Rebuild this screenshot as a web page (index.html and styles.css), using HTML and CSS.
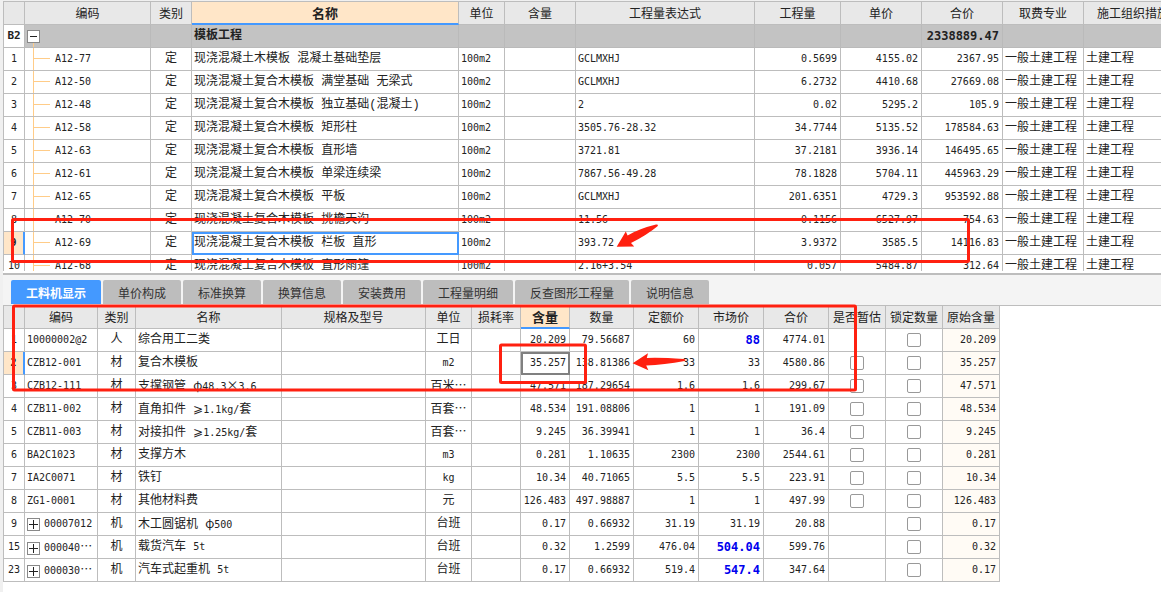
FILE: index.html
```html
<!DOCTYPE html>
<html lang="zh-CN">
<head>
<meta charset="utf-8">
<title>模板工程</title>
<link rel="stylesheet" href="styles.css">
</head>
<body>
<main class="workspace">
<section class="pane">
<div class="pane-body">
<table class="grid items">
<colgroup><col class="w-no"><col class="w-code"><col class="w-kind"><col class="w-name"><col class="w-unit"><col class="w-content"><col class="w-expr"><col class="w-qty"><col class="w-price"><col class="w-price"><col class="w-price"><col></colgroup>
<thead><tr><th></th><th>编码</th><th>类别</th><th class="current">名称</th><th>单位</th><th>含量</th><th>工程量表达式</th><th>工程量</th><th>单价</th><th>合价</th><th>取费专业</th><th class="cut">施工组织措施</th></tr></thead>
<tbody>
<tr class="group"><td>B2</td><td><button class="toggle" type="button" aria-label="收起"><svg width="11" height="11"><path d="M2 5.5h7" stroke="#222"/></svg></button></td><td></td><td>模板工程</td><td></td><td></td><td></td><td></td><td></td><td>2338889.47</td><td></td><td></td></tr>
<tr><td>1</td><td>A12-77</td><td>定</td><td>现浇混凝土木模板 混凝土基础垫层</td><td>100m2</td><td></td><td>GCLMXHJ</td><td>0.5699</td><td>4155.02</td><td>2367.95</td><td>一般土建工程</td><td>土建工程</td></tr>
<tr><td>2</td><td>A12-50</td><td>定</td><td>现浇混凝土复合木模板 满堂基础 无梁式</td><td>100m2</td><td></td><td>GCLMXHJ</td><td>6.2732</td><td>4410.68</td><td>27669.08</td><td>一般土建工程</td><td>土建工程</td></tr>
<tr><td>3</td><td>A12-48</td><td>定</td><td>现浇混凝土复合木模板 独立基础(混凝土)</td><td>100m2</td><td></td><td>2</td><td>0.02</td><td>5295.2</td><td>105.9</td><td>一般土建工程</td><td>土建工程</td></tr>
<tr><td>4</td><td>A12-58</td><td>定</td><td>现浇混凝土复合木模板 矩形柱</td><td>100m2</td><td></td><td>3505.76-28.32</td><td>34.7744</td><td>5135.52</td><td>178584.63</td><td>一般土建工程</td><td>土建工程</td></tr>
<tr><td>5</td><td>A12-63</td><td>定</td><td>现浇混凝土复合木模板 直形墙</td><td>100m2</td><td></td><td>3721.81</td><td>37.2181</td><td>3936.14</td><td>146495.65</td><td>一般土建工程</td><td>土建工程</td></tr>
<tr><td>6</td><td>A12-61</td><td>定</td><td>现浇混凝土复合木模板 单梁连续梁</td><td>100m2</td><td></td><td>7867.56-49.28</td><td>78.1828</td><td>5704.11</td><td>445963.29</td><td>一般土建工程</td><td>土建工程</td></tr>
<tr><td>7</td><td>A12-65</td><td>定</td><td>现浇混凝土复合木模板 平板</td><td>100m2</td><td></td><td>GCLMXHJ</td><td>201.6351</td><td>4729.3</td><td>953592.88</td><td>一般土建工程</td><td>土建工程</td></tr>
<tr><td>8</td><td>A12-70</td><td>定</td><td>现浇混凝土复合木模板 挑檐天沟</td><td>100m2</td><td></td><td>11.56</td><td>0.1156</td><td>6527.97</td><td>754.63</td><td>一般土建工程</td><td>土建工程</td></tr>
<tr class="active"><td>9</td><td>A12-69</td><td>定</td><td class="selected">现浇混凝土复合木模板 栏板 直形</td><td>100m2</td><td></td><td>393.72</td><td>3.9372</td><td>3585.5</td><td>14116.83</td><td>一般土建工程</td><td>土建工程</td></tr>
<tr><td>10</td><td>A12-68</td><td>定</td><td>现浇混凝土复合木模板 直形雨篷</td><td>100m2</td><td></td><td>2.16+3.54</td><td>0.057</td><td>5484.87</td><td>312.64</td><td>一般土建工程</td><td>土建工程</td></tr>
</tbody>
</table>
</div>
</section>
<nav class="tabs">
<button class="tab tab-active" type="button">工料机显示</button>
<button class="tab" type="button">单价构成</button>
<button class="tab" type="button">标准换算</button>
<button class="tab" type="button">换算信息</button>
<button class="tab" type="button">安装费用</button>
<button class="tab" type="button">工程量明细</button>
<button class="tab" type="button">反查图形工程量</button>
<button class="tab" type="button">说明信息</button>
</nav>
<section class="details">
<table class="grid resources">
<colgroup><col class="w-no"><col class="w-rcode"><col class="w-rkind"><col class="w-rname"><col class="w-spec"><col class="w-unit"><col class="w-loss"><col class="w-loss"><col class="w-rqty"><col class="w-rprice"><col class="w-rprice"><col class="w-rprice"><col class="w-check"><col class="w-check"><col class="w-check"></colgroup>
<thead><tr><th></th><th>编码</th><th>类别</th><th>名称</th><th>规格及型号</th><th>单位</th><th>损耗率</th><th class="current">含量</th><th>数量</th><th>定额价</th><th>市场价</th><th>合价</th><th id="estimate">是否暂估</th><th id="lock">锁定数量</th><th>原始含量</th></tr></thead>
<tbody>
<tr><td>1</td><td>10000002@2</td><td>人</td><td>综合用工二类</td><td></td><td>工日</td><td></td><td>20.209</td><td>79.56687</td><td>60</td><td class="changed">88</td><td>4774.01</td><td></td><td><input class="check" type="checkbox" aria-labelledby="lock"></td><td>20.209</td></tr>
<tr class="active"><td>2</td><td>CZB12-001</td><td>材</td><td>复合木模板</td><td></td><td class="latin">m2</td><td></td><td class="focus">35.257</td><td>138.81386</td><td>33</td><td>33</td><td>4580.86</td><td><input class="check" type="checkbox" aria-labelledby="estimate"></td><td><input class="check" type="checkbox" aria-labelledby="lock"></td><td>35.257</td></tr>
<tr><td>3</td><td>CZB12-111</td><td>材</td><td>支撑钢管 <span class="wide">φ</span><span class="latin">48.3</span><span class="wide">×</span><span class="latin">3.6</span></td><td></td><td>百米<span class="wide">⋯</span></td><td></td><td>47.571</td><td>187.29654</td><td>1.6</td><td>1.6</td><td>299.67</td><td><input class="check" type="checkbox" aria-labelledby="estimate"></td><td><input class="check" type="checkbox" aria-labelledby="lock"></td><td>47.571</td></tr>
<tr><td>4</td><td>CZB11-002</td><td>材</td><td>直角扣件 <span class="wide">⩾</span><span class="latin">1.1kg/</span>套</td><td></td><td>百套<span class="wide">⋯</span></td><td></td><td>48.534</td><td>191.08806</td><td>1</td><td>1</td><td>191.09</td><td><input class="check" type="checkbox" aria-labelledby="estimate"></td><td><input class="check" type="checkbox" aria-labelledby="lock"></td><td>48.534</td></tr>
<tr><td>5</td><td>CZB11-003</td><td>材</td><td>对接扣件 <span class="wide">⩾</span><span class="latin">1.25kg/</span>套</td><td></td><td>百套<span class="wide">⋯</span></td><td></td><td>9.245</td><td>36.39941</td><td>1</td><td>1</td><td>36.4</td><td><input class="check" type="checkbox" aria-labelledby="estimate"></td><td><input class="check" type="checkbox" aria-labelledby="lock"></td><td>9.245</td></tr>
<tr><td>6</td><td>BA2C1023</td><td>材</td><td>支撑方木</td><td></td><td class="latin">m3</td><td></td><td>0.281</td><td>1.10635</td><td>2300</td><td>2300</td><td>2544.61</td><td><input class="check" type="checkbox" aria-labelledby="estimate"></td><td><input class="check" type="checkbox" aria-labelledby="lock"></td><td>0.281</td></tr>
<tr><td>7</td><td>IA2C0071</td><td>材</td><td>铁钉</td><td></td><td class="latin">kg</td><td></td><td>10.34</td><td>40.71065</td><td>5.5</td><td>5.5</td><td>223.91</td><td><input class="check" type="checkbox" aria-labelledby="estimate"></td><td><input class="check" type="checkbox" aria-labelledby="lock"></td><td>10.34</td></tr>
<tr><td>8</td><td>ZG1-0001</td><td>材</td><td>其他材料费</td><td></td><td>元</td><td></td><td>126.483</td><td>497.98887</td><td>1</td><td>1</td><td>497.99</td><td><input class="check" type="checkbox" aria-labelledby="estimate"></td><td><input class="check" type="checkbox" aria-labelledby="lock"></td><td>126.483</td></tr>
<tr><td>9</td><td><button class="toggle" type="button" aria-label="展开"><svg width="11" height="11"><path d="M1 5.5h9M5.5 1v9" stroke="#222"/></svg></button>00007012</td><td>机</td><td>木工圆锯机 <span class="wide">φ</span><span class="latin">500</span></td><td></td><td>台班</td><td></td><td>0.17</td><td>0.66932</td><td>31.19</td><td>31.19</td><td>20.88</td><td></td><td><input class="check" type="checkbox" aria-labelledby="lock"></td><td>0.17</td></tr>
<tr><td>15</td><td><button class="toggle" type="button" aria-label="展开"><svg width="11" height="11"><path d="M1 5.5h9M5.5 1v9" stroke="#222"/></svg></button>000040<span class="wide">⋯</span></td><td>机</td><td>载货汽车 <span class="latin">5t</span></td><td></td><td>台班</td><td></td><td>0.32</td><td>1.2599</td><td>476.04</td><td class="changed">504.04</td><td>599.76</td><td></td><td><input class="check" type="checkbox" aria-labelledby="lock"></td><td>0.32</td></tr>
<tr><td>23</td><td><button class="toggle" type="button" aria-label="展开"><svg width="11" height="11"><path d="M1 5.5h9M5.5 1v9" stroke="#222"/></svg></button>000030<span class="wide">⋯</span></td><td>机</td><td>汽车式起重机 <span class="latin">5t</span></td><td></td><td>台班</td><td></td><td>0.17</td><td>0.66932</td><td>519.4</td><td class="changed">547.4</td><td>347.64</td><td></td><td><input class="check" type="checkbox" aria-labelledby="lock"></td><td>0.17</td></tr>
</tbody>
</table>
</section>
</main>
<svg class="marks" aria-hidden="true">
<g class="frames">
<rect x="12.5" y="219.5" width="956" height="42" rx="1"/>
<rect x="13.5" y="306" width="842" height="84" rx="1"/>
<rect x="500.5" y="345" width="85" height="37.5" rx="1"/>
</g>
<path class="arrow" d="M616.7 246.8L625.8 231.6L627.6 235.4Q640 228.5 656 224.6Q658.5 224.4 657.8 226Q647 235 631 243L634.2 246.6Z"/>
<path class="arrow" d="M632.6 363.3L648 353.2L646.8 358Q660 357.4 684 359Q687 360 684.6 361Q664 364.6 646.2 365.6L648.4 370.3Z"/>
</svg>
</body>
</html>
```
FILE: styles.css
```css
* { box-sizing: border-box; }

body {
  margin: 0;
  height: 100vh;
  padding: 1px 0 0 3px;
  overflow: hidden;
  background: #f0f0f0;
  color: #222;
  font-family: "Noto Sans CJK SC", sans-serif;
  font-size: 12px;
}

.workspace {
  display: flex;
  flex-direction: column;
  height: 100%;
  background: #fff;
}

.pane {
  display: flex;
  flex-direction: column;
  flex: 0 0 46vh;
  min-height: 0;
  padding-bottom: 2px;
}

.pane-body {
  flex: 1;
  min-height: 0;
  overflow: hidden;
}

/* Data grids */
.grid {
  table-layout: fixed;
  border-collapse: separate;
  border-spacing: 0;
  border-top: 1px solid #bdbdbd;
  border-left: 1px solid #bdbdbd;
}

.items { width: 100%; }
.resources { width: 997px; }

.w-no { width: 21px; }
.w-code { width: 126px; }
.w-kind { width: 41px; }
.w-name { width: 267px; }
.w-unit { width: 46px; }
.w-content { width: 71px; }
.w-expr { width: 179px; }
.w-qty { width: 86px; }
.w-price { width: 81px; }
.w-rcode { width: 73px; }
.w-rkind { width: 38px; }
.w-rname { width: 146px; }
.w-spec { width: 144px; }
.w-loss { width: 49px; }
.w-rqty { width: 64px; }
.w-rprice { width: 65px; }
.w-check { width: 57px; }

.grid th,
.grid td {
  height: 23px;
  padding: 0 2px;
  border-right: 1px solid #bdbdbd;
  border-bottom: 1px solid #bdbdbd;
  line-height: 18px;
  white-space: nowrap;
  overflow: hidden;
}

.grid th {
  padding: 0;
  background: #e8e8e8;
  font-weight: 400;
}

.grid .current {
  background: #ffe6c8;
  border-bottom: 2px solid #4499ff;
  font-size: 13px;
  font-weight: 700;
}

.grid .cut {
  padding-left: 13px;
  text-align: left;
}

.grid tr > :last-child { border-right-color: #bdbdbd; }
.items tr > :last-child { border-right: 0; }

.grid td,
.grid .latin {
  font-family: "DejaVu Sans Mono", "Noto Sans CJK SC", monospace;
  font-size: 10px;
}

.grid td:first-child { text-align: center; padding: 0; }

.items td:nth-child(3),
.items td:nth-child(4),
.items td:nth-child(11),
.items td:nth-child(12),
.resources td:nth-child(3),
.resources td:nth-child(4),
.resources td:nth-child(6) {
  font-family: "Liberation Mono", "Noto Sans CJK SC", monospace;
  font-size: 12px;
}

.resources td:nth-child(6).latin {
  font-family: "DejaVu Sans Mono", monospace;
  font-size: 10px;
}

.grid .wide {
  font-family: "Noto Sans CJK SC", sans-serif;
  font-size: 12px;
}

.items td:nth-child(3),
.resources td:nth-child(3),
.resources td:nth-child(6),
.resources td:nth-child(13),
.resources td:nth-child(14) { text-align: center; }

.items td:nth-child(8),
.items td:nth-child(9),
.items td:nth-child(10),
.resources td:nth-child(n+8):nth-child(-n+12),
.resources td:nth-child(15) {
  padding-right: 3px;
  text-align: right;
}

.resources td:nth-child(15) { background: #fffbf5; }

/* Tree branches in the code column */
.items td:nth-child(2) {
  padding-left: 30px;
  background:
    linear-gradient(#ffcc88, #ffcc88) 8px 0 / 1px 100% no-repeat,
    linear-gradient(#ffcc88, #ffcc88) 8px 10px / 17px 1px no-repeat;
}

.items .group td { background: #c3c3c3; border-color: #bababa; font-weight: 700; }
.items .group td:first-child { background: #fff; font-size: 11px; }
.items .group td:nth-child(2) {
  padding-left: 2px;
  background: linear-gradient(#ffcc88, #ffcc88) 8px 17px / 1px 5px no-repeat #c3c3c3;
}
.items .group td:nth-child(4) { font-size: 12px; }
.items .group td:nth-child(10) { font-size: 12px; }

.grid .active td:first-child {
  background: #ffe6c8;
  border-right: 2px solid #4499ff;
  font-weight: 700;
}

.items .selected { outline: 2px solid #4499ff; outline-offset: -2px; }
.resources .focus { outline: 2px solid #808080; outline-offset: -2px; }
.resources .changed { color: #0000ee; font-size: 12px; font-weight: 700; }

.toggle {
  width: 13px;
  height: 13px;
  margin: 0 4px 0 0;
  padding: 0;
  border: 1px solid #888;
  background: #fff;
  vertical-align: -3px;
}

.toggle svg { display: block; }

.check {
  appearance: none;
  display: block;
  width: 14px;
  height: 14px;
  margin: 0 auto;
  border: 1px solid #999;
  border-radius: 2px;
  background: #fff;
}

/* Tab strip */
.tabs {
  display: flex;
  flex: 0 0 32px;
  gap: 2px;
  padding: 5px 8px 1px;
  border-top: 2px solid #bdbdbd;
  background: #f4f4f4;
}

.tab {
  padding: 0 15px;
  border: 0;
  border-radius: 2px 2px 0 0;
  background: #bdbdbd;
  color: #333;
  font: inherit;
  white-space: nowrap;
}

.tab-active {
  background: #4499ff;
  color: #fff;
  font-weight: 700;
}

.details {
  flex: 1;
  border-top: 1px solid #bdbdbd;
}

.details .grid { border-top: 0; }

/* Review marks */
.marks {
  position: absolute;
  inset: 0;
  width: 100%;
  height: 100%;
  pointer-events: none;
}

.frames { fill: none; stroke: #ff2010; stroke-width: 3; }
.arrow { fill: #ff2010; }
```
